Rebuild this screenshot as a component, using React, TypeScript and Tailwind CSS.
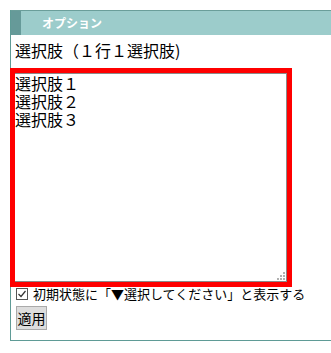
import React from "react";

export default function App() {
  return (
    <div className="w-[331px] h-[353px] overflow-hidden bg-white pt-[10px] pl-[10px]" style={{ fontFamily: '"MS UI Gothic", "Noto Sans CJK JP", sans-serif' }}>
      <div className="w-[340px] h-[331px] border-l border-b border-[#5f9b96] flex flex-col">
        <div className="flex h-[25px] border-t border-[#6a9e9a] bg-[#9ccccb]">
          <div className="w-[10px] bg-[#669a99]" />
          <div className="pl-[21px] text-[12px] font-bold text-white leading-[23px]">オプション</div>
        </div>
        <div className="pl-[4px] flex flex-col">
          <div className="pt-[3px] text-[16px] leading-[24px] text-black mb-[6px]">選択肢（１行１選択肢)</div>
          <div className="relative z-10 -ml-[5px] w-[282px] h-[219px] border-[5px] border-[#ff0000] bg-white">
            <textarea
              className="block w-full h-full resize-none border-t border-r border-b border-[#8a8a8a] bg-white p-0 text-[16px] leading-[18px] text-black outline-none"
              defaultValue={"選択肢１\n選択肢２\n選択肢３"}
              style={{ fontFamily: '"MS Gothic", "Noto Sans CJK JP", monospace' }}
            />
            <svg className="absolute right-[2px] bottom-[2px]" width="8" height="8" viewBox="0 0 8 8">
              <rect x="6" y="0" width="2" height="2" fill="#b0b0b0" />
              <rect x="3" y="3" width="2" height="2" fill="#b0b0b0" />
              <rect x="6" y="3" width="2" height="2" fill="#b0b0b0" />
              <rect x="0" y="6" width="2" height="2" fill="#b0b0b0" />
              <rect x="3" y="6" width="2" height="2" fill="#b0b0b0" />
              <rect x="6" y="6" width="2" height="2" fill="#b0b0b0" />
            </svg>
          </div>
          <div className="flex items-center h-[16px] -mt-[1px] text-[13px] leading-[16px] text-black whitespace-nowrap">
            <span className="inline-flex items-center justify-center w-[12px] h-[12px] border border-[#555] mr-[5px] ml-[1px]">
              <svg width="10" height="10" viewBox="0 0 10 10">
                <path d="M1.5 5 L4 7.5 L8.5 2" stroke="#333" strokeWidth="1.2" fill="none" />
              </svg>
            </span>
            <span>初期状態に「▼選択してください」と表示する</span>
          </div>
          <div className="mt-[3px] ml-[1px]">
            <button className="w-[31px] h-[24px] bg-[#dddddd] border border-[#aaaaaa] text-[14px] leading-[20px] text-black p-0 whitespace-nowrap">適用</button>
          </div>
        </div>
      </div>
    </div>
  );
}
